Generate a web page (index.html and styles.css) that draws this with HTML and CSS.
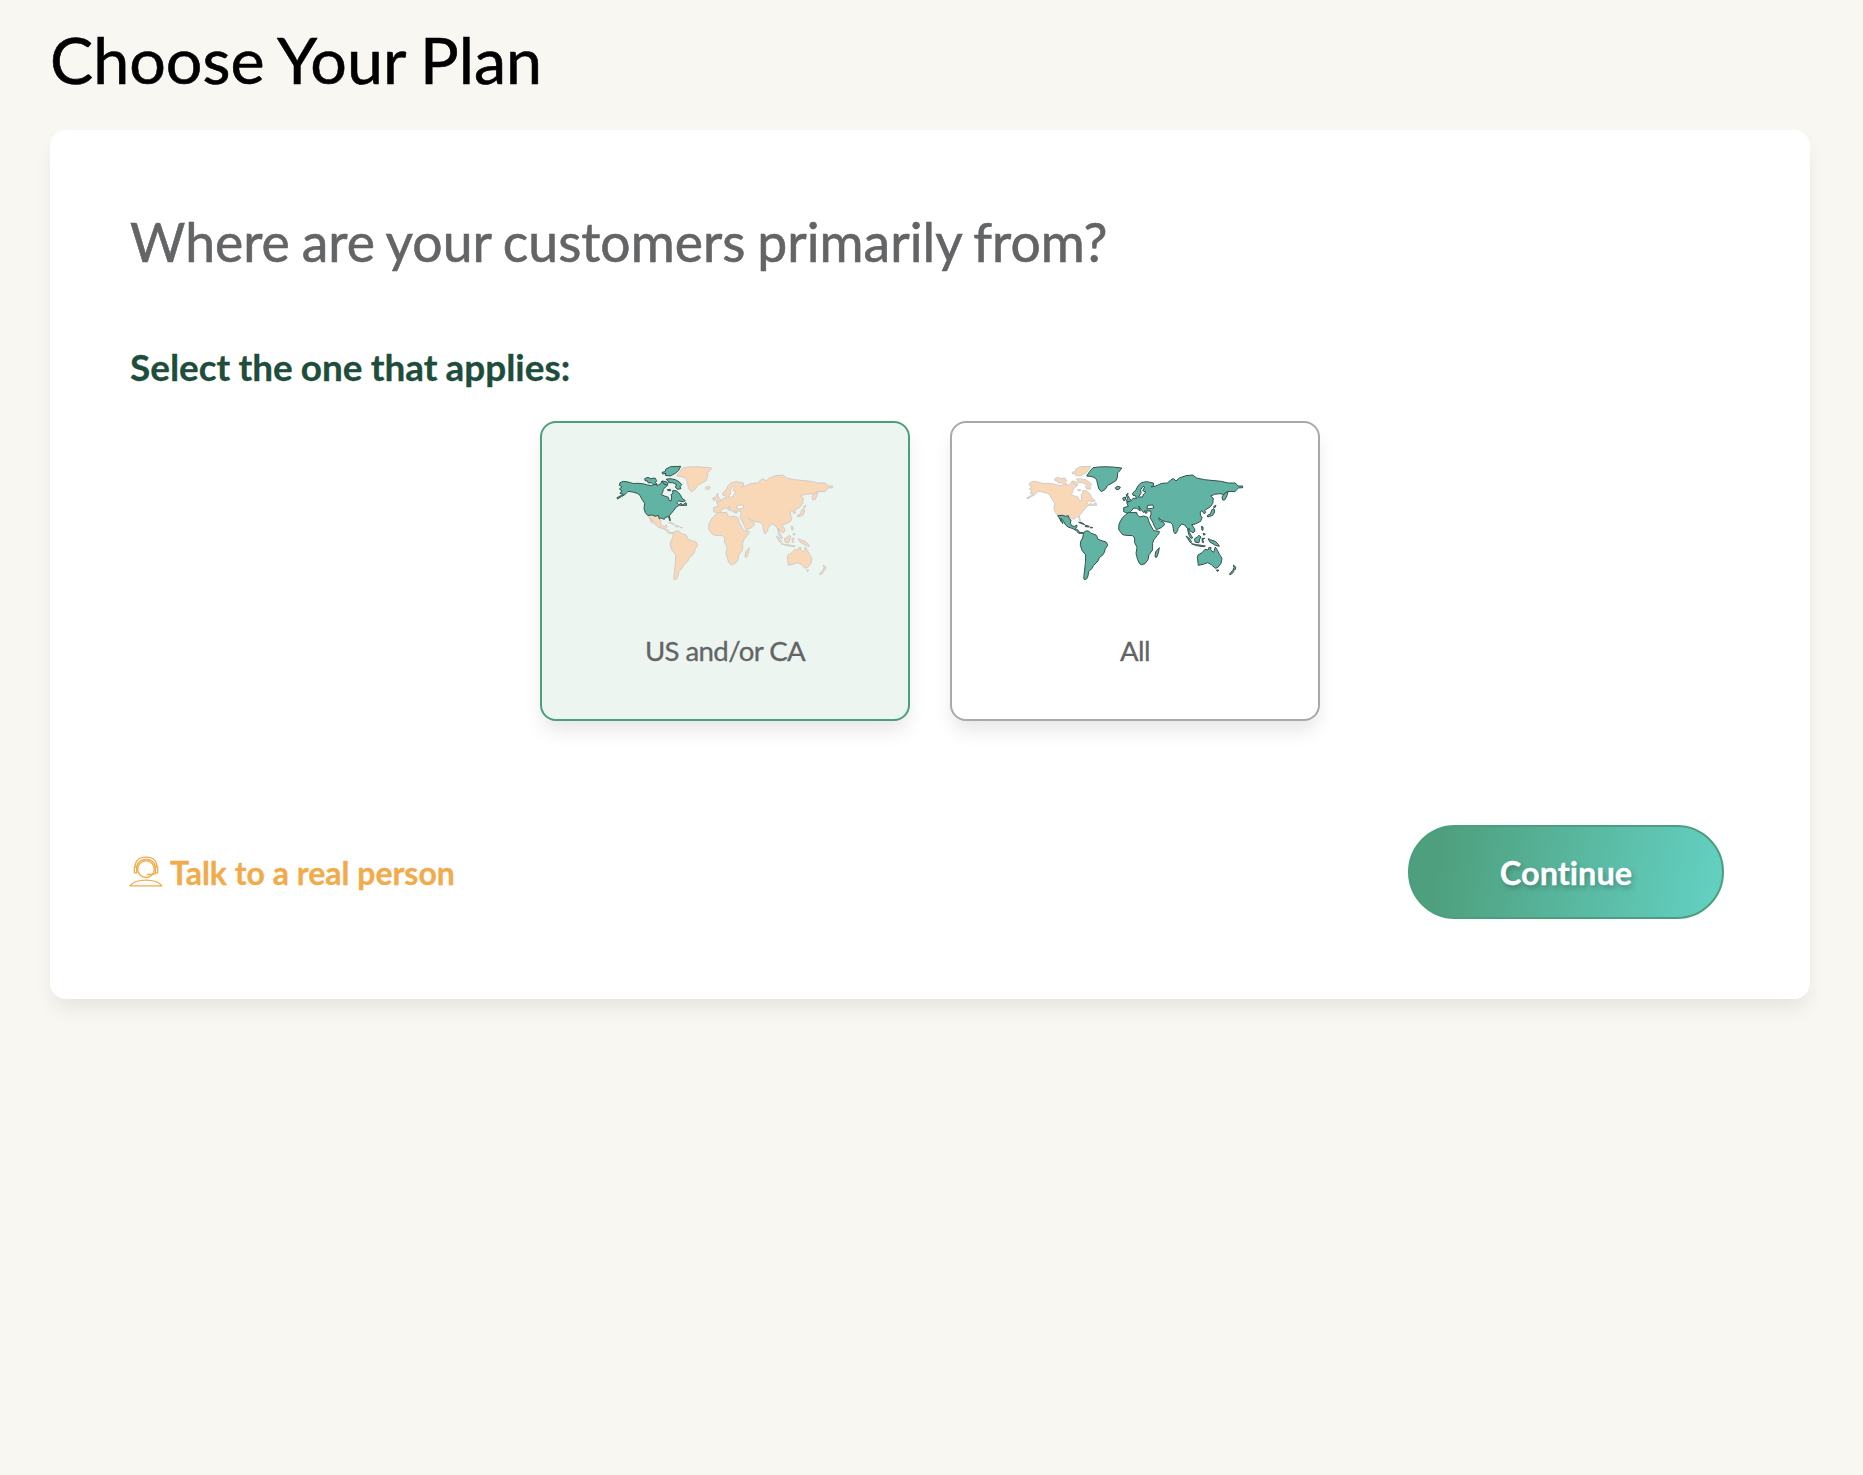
FILE: index.html
```html
<!DOCTYPE html>
<html lang="en">
<head>
<meta charset="utf-8">
<title>Choose Your Plan</title>
<link rel="stylesheet" href="styles.css">
</head>
<body>
<svg class="sprite" aria-hidden="true">
  <defs>
    <g id="us-ca">
      <path d="M60 98L70 94L84 96Q100 103 114 100L128 101L142 105L155 107L165 102L172 107L182 101L186 93L192 100L200 98L203 106L196 111L190 118L188 127L184 134L194 138L205 142L208 152L214 152L215 141L213 134L219 130L218 122L228 122L236 128L242 136L246 145L256 152L250 155L236 153L230 158L236 164L244 160L246 166L258 158L260 166L248 166L238 166L230 170L222 180L214 190L208 197L211 212L209 212L206 200L196 202L193 208L182 204L178 207L175 196L165 199L158 195L143 196L136 188L132 176L134 160L126 148L120 136L112 130L98 126L84 124L76 133L64 140L52 147L51 143L70 133L60 130L66 122L58 117L66 110L58 106Z"/>
      <path d="M134 86L144 82L152 86L165 84L170 92L166 98L172 103L160 104L154 98L145 99L142 92L136 93Z"/>
      <path d="M186 67L195 65L198 57L212 50L242 49L236 61L226 70L210 78L196 76L198 70L188 72Z"/>
      <path d="M198 88L210 86L226 89L238 96L245 104L240 110L243 116L232 118L226 111L230 104L218 98L206 98L204 92Z"/>
      <path d="M186 93L198 95L204 100L200 105L192 102ZM202 119L211 118L212 122L204 122Z"/>
    </g>
    <g id="rest">
      <path d="M143 197L158 196L166 199L175 197L178 207L183 210L181 220L186 228L194 229L200 225L201 230L196 236L205 241L209 248L218 247L220 250L206 250L198 241L186 235L174 231L166 224L160 213L152 204L159 221L154 216L148 204Z"/>
      <path d="M206 217L214 217L224 224L212 220ZM226 226L236 228L238 231L226 230ZM242 231L248 233L242 234Z"/>
      <path d="M221 247Q230 240 236 243Q242 252 250 252L258 255Q262 260 264 268L278 273Q291 274 293 284Q292 290 286 296Q284 308 279 314L268 323Q266 333 258 339L250 347Q247 358 236 364L234 378Q231 390 223 389Q220 386 222 376L226 340L227 314Q214 304 211 286Q209 274 218 264Z"/>
      <path d="M230 78Q238 64 249 53Q284 47 335 54Q332 62 323 68Q324 84 318 92Q306 100 293 106Q288 120 274 125Q264 118 263 104Q261 90 257 85Q248 78 230 78Z"/>
      <path d="M316 113L322 109L331 111L328 117L321 119L316 116Z"/>
      <path d="M338 144L346 141L347 149L341 152ZM349 134L354 129L353 136L359 146L363 151L358 156L349 154L352 146Z"/>
      <path d="M368 129L378 120L384 107L394 98L409 95L430 99L431 106L423 111L437 108L446 104L456 100L472 99L486 87L491 86L498 93L508 84L528 77L548 75L560 84L583 89L603 91L634 94L654 99L676 99L684 108L698 108L698 113L685 114L680 119L675 125L657 124L646 128L642 134L630 131L614 133L602 138L610 145L608 161L600 171L584 181L587 188L582 191L576 182L571 185L571 195L576 203L572 214L556 222L545 224L553 235L555 243L549 249L540 242L536 234L538 247L544 257L548 264L542 265L536 253L532 235L524 225L515 222L504 235L503 242L496 252L491 245L488 224L480 217L466 215L453 210L446 203L449 212L461 217L464 224L454 233L439 239L434 230L428 216L420 203L423 192L423 184L410 182L411 189L405 189L405 181L401 188L395 181L386 168L391 183L380 175L371 174L363 184L354 190L341 185L341 173L355 169L350 158L364 152L369 145L380 145L376 137L369 136Z"/>
      <path class="water" d="M413 166L429 165L431 174L411 177ZM385 141L393 130L392 119L399 109L404 111L398 122L408 126L401 132L397 141Z"/>
      <path d="M348 193L357 187L369 188L380 187L382 195L390 201L401 198L413 202L418 219L431 242L448 244Q448 252 442 256L431 270Q426 280 428 290L427 301L417 314L414 329Q406 345 394 344Q388 344 383 329L378 310L381 292L374 278L374 264L368 257L348 256L338 254L326 239L327 222L336 205Z"/>
      <path d="M437 305L448 293L445 309L440 322L435 321Z"/>
      <path d="M638 150L636 141L642 132L649 127L654 127L649 142L644 150ZM610 171L618 165L615 173ZM592 196L601 192L606 179L612 176L614 186L608 196L593 201Z"/>
      <path d="M574 229L579 231L579 241L576 240ZM579 250L586 252L582 256ZM553 267L563 260L567 256L573 261L569 267L567 278L556 277ZM576 265L584 265L578 269L581 278L577 277ZM528 258L536 263L545 275L542 279ZM544 281L560 284L575 286L586 288L580 290L560 287ZM594 266L601 269L616 274L625 283L628 289L616 286L600 276Z"/>
      <path d="M562 322L564 315L576 308L585 298L594 300L597 292L603 293L602 300L611 307L616 291L622 301L629 314L636 325L633 340L624 352L616 355L604 344L593 338L580 343L565 346ZM619 360L626 360L623 365Z"/>
      <path d="M670 345L678 352L675 360L669 359L672 353ZM668 361L672 364L664 373L658 373Z"/>
    </g>
  </defs>
</svg>

<main class="page">
  <h1 class="page-title">Choose Your Plan</h1>
  <section class="panel">
    <h2 class="question">Where are your customers primarily from?</h2>
    <p class="hint">Select the one that applies:</p>
    <div class="options">
      <button class="option selected" type="button">
        <svg class="map" viewBox="0 0 750 420" aria-hidden="true"><use class="land muted" href="#rest"/><use class="land active" href="#us-ca"/></svg>
        <span class="label">US and/or CA</span>
      </button>
      <button class="option" type="button">
        <svg class="map" viewBox="0 0 750 420" aria-hidden="true"><use class="land muted" href="#us-ca"/><use class="land active" href="#rest"/></svg>
        <span class="label">All</span>
      </button>
    </div>
    <footer class="actions">
      <a class="talk">
        <svg class="agent" viewBox="0 0 102 92" aria-hidden="true">
          <circle cx="51" cy="39" r="25"/>
          <path d="M18 33C18 14 31 3 51 3S84 14 84 33M23 31C26 17 36 10 51 10S76 17 79 31M16 33H23V50H16ZM79 33H86V50H79ZM83 50C78 56 68 55 53 55M3 89C20 66 82 66 99 89Z"/>
        </svg>
        <span>Talk to a real person</span>
      </a>
      <button class="continue" type="button">Continue</button>
    </footer>
  </section>
</main>
</body>
</html>
```
FILE: styles.css
```css
* {
  box-sizing: border-box;
}

body {
  margin: 0;
  background: #f8f7f2;
  color: #000;
  font-family: Lato, "Liberation Sans", sans-serif;
  font-variant-ligatures: none;
}

.sprite {
  position: absolute;
  width: 0;
  height: 0;
}

.page {
  min-height: 1475px;
  padding: 20px 53px 0 50px;
}

.page-title {
  margin: 0 0 32px;
  font-size: 64.6px;
  font-weight: 400;
  line-height: 78px;
  word-spacing: -1.5px;
  -webkit-text-stroke: 0.6px currentColor;
}

.panel {
  height: 869px;
  padding: 78px 80px 80px;
  border-radius: 16px;
  background: #fff;
  box-shadow: 0 12px 20px -3px rgba(0, 0, 0, 0.08);
}

.question {
  margin: 0;
  color: #636466;
  font-size: 53.5px;
  font-weight: 400;
  line-height: 66px;
  word-spacing: -1.8px;
  -webkit-text-stroke: 0.6px currentColor;
}

.hint {
  margin: 71px 0 31px;
  color: #1e4d3b;
  font-size: 36.9px;
  font-weight: 700;
  line-height: 45px;
  word-spacing: -0.8px;
  -webkit-text-stroke: 0.3px currentColor;
}

.options {
  display: flex;
  justify-content: center;
  gap: 40px;
}

.option {
  display: flex;
  flex-direction: column;
  align-items: center;
  width: 370px;
  height: 300px;
  padding: 27px 0 0;
  border: 2px solid #a9a9ab;
  border-radius: 16px;
  background: #fff;
  box-shadow: 0 12px 20px -3px rgba(0, 0, 0, 0.1);
  color: #636466;
  font: 400 27.6px/36px Lato, "Liberation Sans", sans-serif;
}

.option.selected {
  border-color: #4b9f7d;
  background: #edf5f0;
}

.map {
  width: 250px;
  height: 140px;
  stroke-width: 3;
  stroke-linejoin: round;
}

.muted {
  fill: #f9d8b7;
  stroke: #d0cdca;
}

.active {
  fill: #61b3a3;
  stroke: #34544e;
}

.water {
  fill: #fff;
}

.selected .water {
  fill: #edf5f0;
}

.label {
  margin-top: 43px;
  letter-spacing: -0.6px;
  -webkit-text-stroke: 0.3px currentColor;
}

.actions {
  display: flex;
  align-items: center;
  justify-content: space-between;
  margin: 104px 6px 0 -1px;
}

.talk {
  display: flex;
  align-items: center;
  gap: 7px;
  color: #f2ab4a;
  font-size: 32px;
  font-weight: 700;
  -webkit-text-stroke: 0.3px currentColor;
}

.agent {
  width: 34px;
  height: 31px;
  margin-top: -2px;
  fill: none;
  stroke: #f2ab4a;
  stroke-width: 4;
  stroke-linejoin: round;
}

.continue {
  width: 316px;
  height: 94px;
  padding: 2px 0 0;
  border: 2px solid #4b9f7d;
  border-radius: 47px;
  background: linear-gradient(100deg, #4e9f7d 10%, #63cfc0 95%);
  color: #fff;
  font: 700 32.5px/40px Lato, "Liberation Sans", sans-serif;
  font-variant-ligatures: none;
  text-shadow: 2px 3px 5px rgba(0, 0, 0, 0.25);
  -webkit-text-stroke: 0.3px currentColor;
}
```
